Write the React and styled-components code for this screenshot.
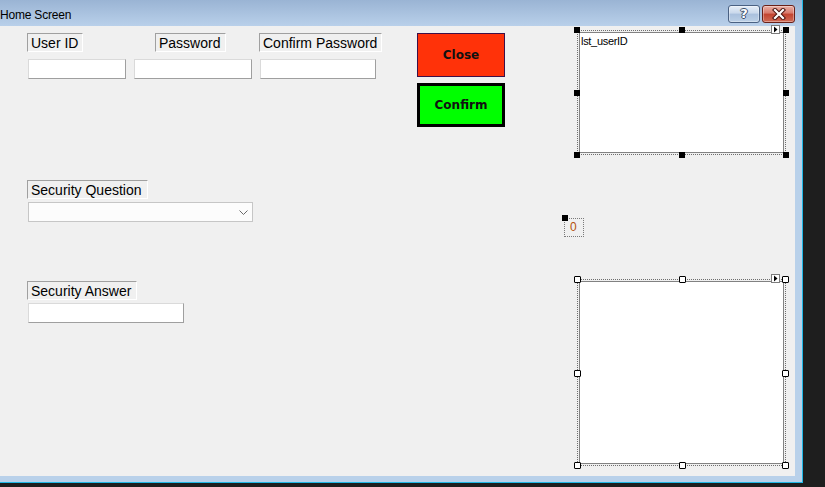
import React from "react";
import styled, { createGlobalStyle } from "styled-components";

const GlobalStyle = createGlobalStyle`
  html, body {
    margin: 0;
    padding: 0;
    background: #1e1e1e;
  }
  body {
    font-family: "Liberation Sans", Arial, sans-serif;
  }
  * {
    box-sizing: border-box;
  }
`;

const Screen = styled.div`
  width: 825px;
  height: 487px;
  background: #1e1e1e;
  overflow: hidden;
`;

const Window = styled.div`
  width: 803px;
  height: 483px;
  display: flex;
  flex-direction: column;
  background: #b9d1ea;
  border-right: 1px solid #1fb8e6;
  border-bottom: 1px solid #1fb8e6;
`;

const TitleBar = styled.div`
  height: 26px;
  flex: none;
  display: flex;
  align-items: flex-start;
  justify-content: space-between;
  padding-right: 7px;
  background: linear-gradient(#9ab4d4, #b9d0ea);
`;

const Title = styled.span`
  padding-top: 5px;
  font-size: 12px;
  line-height: 21px;
  letter-spacing: -0.2px;
  color: #000;
`;

const CaptionButtons = styled.div`
  display: flex;
  gap: 2px;
  margin-top: 5px;
`;

const CaptionButton = styled.div`
  width: ${(p) => p.$w}px;
  height: 18px;
  display: flex;
  align-items: center;
  justify-content: center;
  border-radius: 3px;
  border: 1px solid ${(p) => (p.$danger ? "#6a2119" : "#4a6182")};
  background: ${(p) =>
    p.$danger
      ? "linear-gradient(#eab0a5, #d8786a 45%, #c2432f 50%, #cf6a55)"
      : "linear-gradient(#e6eef8, #c9d8eb 45%, #a9c0dd 50%, #bcd0e6)"};
  box-shadow: inset 0 0 0 1px rgba(255, 255, 255, 0.35);
`;

const HelpGlyph = styled.span`
  font-family: "DejaVu Sans", sans-serif;
  font-weight: bold;
  font-size: 13px;
  line-height: 14px;
  color: #fff;
  text-shadow: -1px 0 #3b4f6b, 1px 0 #3b4f6b, 0 -1px #3b4f6b, 0 1px #3b4f6b;
`;

const Client = styled.div`
  width: 795px;
  height: 450px;
  flex: none;
  display: flex;
  background: #f0f0f0;
`;

const LeftPane = styled.div`
  width: 417px;
  flex: none;
  display: flex;
  flex-direction: column;
  align-items: flex-start;
  padding: 7px 0 0 27px;
`;

const TopRow = styled.div`
  display: flex;
  align-items: flex-start;
`;

const FieldGroup = styled.div`
  display: flex;
  flex-direction: column;
  align-items: flex-start;
  gap: ${(p) => p.$gap ?? 3}px;
  margin-left: ${(p) => p.$offset || 0}px;
  margin-top: ${(p) => p.$top || 0}px;
`;

const FieldLabel = styled.div`
  width: ${(p) => p.$w}px;
  height: 19px;
  margin-left: ${(p) => p.$indent || 0}px;
  padding-left: 3px;
  border: 1px solid;
  border-color: #a0a0a0 #ffffff #ffffff #a0a0a0;
  font-size: 14px;
  line-height: 18px;
  color: #000;
  white-space: nowrap;
`;

const TextBox = styled.div`
  width: ${(p) => p.$w}px;
  height: 20px;
  margin-left: ${(p) => p.$indent ?? 1}px;
  background: #fff;
  border: 1px solid;
  border-color: #dadada #9f9f9f #9f9f9f #dadada;
`;

const ComboBox = styled.div`
  width: ${(p) => p.$w}px;
  height: 20px;
  margin-left: 1px;
  display: flex;
  align-items: center;
  justify-content: flex-end;
  padding-right: 4px;
  background: #fcfcfc;
  border: 1px solid #c6c6c6;
`;

const ButtonColumn = styled.div`
  display: flex;
  flex-direction: column;
  gap: 6px;
  padding-top: 7px;
`;

const ActionButton = styled.div`
  width: 88px;
  height: 44px;
  display: flex;
  align-items: center;
  justify-content: center;
  background: ${(p) => p.$bg};
  border: ${(p) => p.$border};
  font-family: "DejaVu Sans", sans-serif;
  font-weight: bold;
  font-size: 12px;
  color: #111;
`;

const RightPane = styled.div`
  margin-left: 59px;
  display: flex;
  flex-direction: column;
  align-items: flex-start;
`;

const SelectFrame = styled.div`
  position: relative;
  width: 209px;
  height: ${(p) => p.$h}px;
  margin-left: 13px;
  margin-top: ${(p) => p.$top}px;
  padding: 1px;
  border: 1px dotted #6e6e6e;
`;

const ListBox = styled.div`
  width: 100%;
  height: 100%;
  background: #fff;
  border: 1px solid #828282;
  padding: 2px 1px 0;
  font-size: 11px;
  line-height: 13px;
  letter-spacing: -0.3px;
  color: #000;
`;

const Handle = styled.span`
  position: absolute;
  width: ${(p) => (p.$primary ? 6 : 7)}px;
  height: ${(p) => (p.$primary ? 6 : 7)}px;
  background: ${(p) => (p.$primary ? "#000" : "#fff")};
  border: ${(p) => (p.$primary ? "none" : "1px solid #000")};
  border-radius: ${(p) => (p.$primary ? 0 : 1)}px;
  ${(p) => p.$x === "l" && "left: -4px;"}
  ${(p) => p.$x === "c" && "left: calc(50% - 3px);"}
  ${(p) => p.$x === "r" && "right: -4px;"}
  ${(p) => p.$y === "t" && "top: -4px;"}
  ${(p) => p.$y === "m" && "top: calc(50% - 3px);"}
  ${(p) => p.$y === "b" && "bottom: -4px;"}
`;

const SmartTag = styled.span`
  position: absolute;
  top: -6px;
  right: 5px;
  width: 9px;
  height: 9px;
  display: flex;
  align-items: center;
  justify-content: center;
  background: #fff;
  border: 1px solid #7c7c7c;
`;

const CountLabel = styled.div`
  position: relative;
  width: 20px;
  height: 19px;
  margin-top: 63px;
  padding-left: 5px;
  border: 1px dotted #7a7a7a;
  font-size: 12px;
  line-height: 17px;
  color: #b4500a;
`;

const CornerHandle = styled.span`
  position: absolute;
  left: -3px;
  top: -4px;
  width: 6px;
  height: 6px;
  background: #000;
`;

const handleSpots = [
  ["l", "t"], ["c", "t"], ["r", "t"],
  ["l", "m"], ["r", "m"],
  ["l", "b"], ["c", "b"], ["r", "b"],
];

function Selected({ h, top, primary, children }) {
  return (
    <SelectFrame $h={h} $top={top}>
      <ListBox>{children}</ListBox>
      <SmartTag>
        <svg width="7" height="7" viewBox="0 0 7 7">
          <polygon points="2,0.5 5.5,3.5 2,6.5" fill="#000" />
        </svg>
      </SmartTag>
      {handleSpots.map(([x, y]) => (
        <Handle key={x + y} $x={x} $y={y} $primary={primary} />
      ))}
    </SelectFrame>
  );
}

export default function App() {
  return (
    <>
      <GlobalStyle />
      <Screen>
        <Window>
          <TitleBar>
            <Title>Home Screen</Title>
            <CaptionButtons>
              <CaptionButton $w={32}>
                <HelpGlyph>?</HelpGlyph>
              </CaptionButton>
              <CaptionButton $w={33} $danger>
                <svg width="14" height="12" viewBox="0 0 14 12">
                  <path d="M3 2 L11 10 M11 2 L3 10" stroke="#4a1410" strokeWidth="4.2" strokeLinecap="square" />
                  <path d="M3 2 L11 10 M11 2 L3 10" stroke="#fff" strokeWidth="2.2" strokeLinecap="square" />
                </svg>
              </CaptionButton>
            </CaptionButtons>
          </TitleBar>

          <Client>
            <LeftPane>
              <TopRow>
                <FieldGroup $gap={7}>
                  <FieldLabel $w={56}>User ID</FieldLabel>
                  <TextBox $w={98} />
                </FieldGroup>
                <FieldGroup $gap={7} $offset={8}>
                  <FieldLabel $w={71} $indent={21}>Password</FieldLabel>
                  <TextBox $w={118} $indent={0} />
                </FieldGroup>
                <FieldGroup $gap={7} $offset={7}>
                  <FieldLabel $w={123}>Confirm Password</FieldLabel>
                  <TextBox $w={116} />
                </FieldGroup>
              </TopRow>

              <FieldGroup $top={101}>
                <FieldLabel $w={121}>Security Question</FieldLabel>
                <ComboBox $w={225}>
                  <svg width="9" height="5" viewBox="0 0 9 5">
                    <polyline points="0.5,0.5 4.5,4.5 8.5,0.5" fill="none" stroke="#6a6a6a" strokeWidth="1" />
                  </svg>
                </ComboBox>
              </FieldGroup>

              <FieldGroup $top={59}>
                <FieldLabel $w={110}>Security Answer</FieldLabel>
                <TextBox $w={156} />
              </FieldGroup>
            </LeftPane>

            <ButtonColumn>
              <ActionButton $bg="#ff3209" $border="1px solid #3d1048">
                Close
              </ActionButton>
              <ActionButton $bg="#00ff00" $border="3px solid #000">
                Confirm
              </ActionButton>
            </ButtonColumn>

            <RightPane>
              <Selected h={125} top={4} primary>
                lst_userID
              </Selected>
              <CountLabel>
                0
                <CornerHandle />
              </CountLabel>
              <Selected h={187} top={42} />
            </RightPane>
          </Client>
        </Window>
      </Screen>
    </>
  );
}
